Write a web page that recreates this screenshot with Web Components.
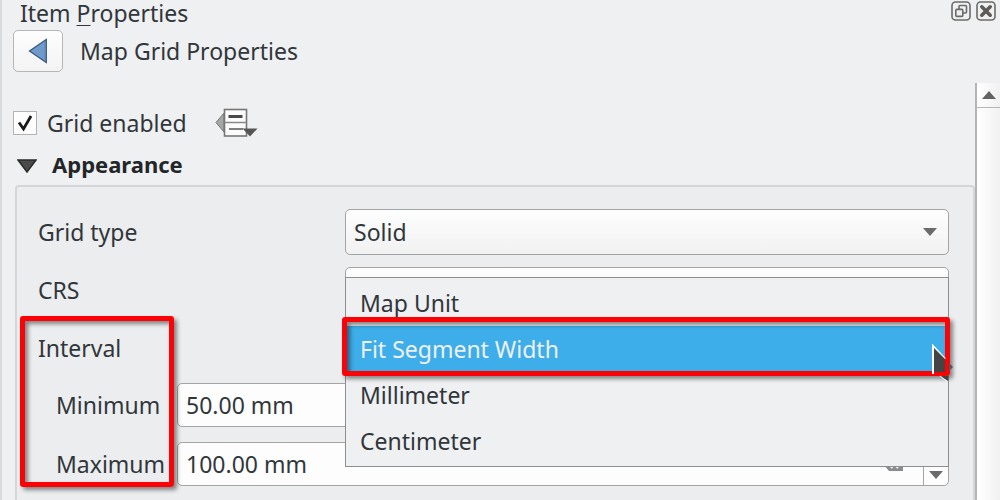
<!DOCTYPE html>
<html lang="en">
<head>
<meta charset="utf-8">
<title>Item Properties</title>
<style>
  body { margin: 0; background: #eff0f1; color: #31363b; font: 23px/30px "Noto Sans", sans-serif; height: 100vh; overflow: hidden; }
</style>
</head>
<body>
<dock-panel>
  <title-bar slot="title"></title-bar>
  <page-header slot="header">Map Grid Properties</page-header>
  <enable-row></enable-row>
  <group-box heading="Appearance">
    <select-field label="Grid type" value="Solid"></select-field>
    <select-field label="CRS" value=""></select-field>
    <interval-fields></interval-fields>
  </group-box>
</dock-panel>

<script>
const define = (name, html, setup) => {
  const template = document.createElement('template');
  template.innerHTML = '<style>*{box-sizing:border-box}button,input,select{font:inherit;color:inherit;margin:0}</style>' + html;
  customElements.define(name, class extends HTMLElement {
    connectedCallback() {
      if (this.shadowRoot) return;
      const root = this.attachShadow({ mode: 'open' });
      root.append(template.content.cloneNode(true));
      if (setup) setup(this, root);
    }
  });
};

define('dock-panel', `
  <style>
    :host { display: flex; flex-direction: column; height: 100%; box-sizing: border-box; border-left: 2px solid #d9dadb; }
    .view { display: flex; flex: 1; min-height: 0; margin-top: 11px; }
    .content { flex: 1; min-width: 0; overflow: hidden; padding-top: 24px; }
  </style>
  <slot name="title"></slot>
  <slot name="header"></slot>
  <div class="view">
    <div class="content"><slot></slot></div>
    <scroll-rail></scroll-rail>
  </div>`);

define('scroll-rail', `
  <style>
    :host { display: block; width: 25px; box-sizing: border-box; border-left: 2px solid #b4b5b6; background: linear-gradient(90deg, #fff, #f1f1f2); }
    button { display: grid; place-items: center; width: 100%; height: 25px; padding: 0; border: 0; border-bottom: 1px solid #b4b5b6; background: none; }
    svg { display: block; }
  </style>
  <button type="button" aria-label="Scroll up"><svg width="14" height="8" viewBox="0 0 14 8"><path d="M7 0 14 8H0Z" fill="#626363"/></svg></button>`);

define('title-bar', `
  <style>
    :host { display: flex; align-items: center; height: 26px; padding: 0 4px 0 18px; }
    h1 { flex: 1; margin: 0; font: inherit; line-height: 26px; }
    u { text-underline-offset: 3px; text-decoration-thickness: 1px; text-decoration-skip-ink: none; }
    div { display: flex; gap: 5px; padding-bottom: 4px; }
    button { display: block; padding: 0; border: 0; background: none; }
    svg { display: block; }
  </style>
  <h1>Item <u>P</u>roperties</h1>
  <div>
    <button type="button" aria-label="Float"><svg width="20" height="20" viewBox="0 0 20 20" fill="none" stroke="#6b6b69" stroke-width="1.6"><rect x="1" y="1" width="18" height="18" rx="3.5"/><path d="M8 8V5.500a1 1 0 0 1 1-1h5.500a1 1 0 0 1 1 1V11a1 1 0 0 1-1 1H12"/><rect x="4.800" y="8.400" width="7" height="7" rx="1"/></svg></button>
    <button type="button" aria-label="Close"><svg width="20" height="20" viewBox="0 0 20 20" fill="none" stroke="#6b6b69"><rect x="1" y="1" width="18" height="18" rx="3.500" stroke-width="1.6"/><path d="m5.800 5.800 8.400 8.400m0-8.400-8.400 8.400" stroke="#5c5b58" stroke-width="3.600" stroke-linecap="round"/></svg></button>
  </div>`);

define('page-header', `
  <style>
    :host { display: flex; align-items: center; gap: 17px; padding: 4px 11px 0; }
    button { display: grid; place-items: center; width: 50px; height: 42px; padding: 0; border: 1px solid #b5b6b7; border-radius: 5px; background: linear-gradient(#fefefe, #f3f3f4); }
    h2 { margin: 0; font: inherit; }
  </style>
  <button type="button" aria-label="Back"><svg width="20" height="26" viewBox="0 0 20 26"><path d="M18.300 1.500v23L1.500 13Z" fill="#6f9bcb" stroke="#3a5a80" stroke-width="1.300"/><path d="M17 4v18" stroke="#5b87b8" stroke-width="1"/></svg></button>
  <h2><slot></slot></h2>`);

define('enable-row', `
  <style>
    :host { display: flex; align-items: center; gap: 28px; height: 32px; padding: 0 0 2px 11px; }
    label { display: flex; align-items: center; gap: 10px; }
    .box { display: grid; }
    .box > * { grid-area: 1 / 1; }
    input { appearance: none; width: 24px; height: 24px; border: 1px solid #b2b3b4; background: #fdfdfd; }
    svg { display: block; pointer-events: none; }
    button { padding: 0; border: 0; background: none; }
  </style>
  <label><span class="box"><input type="checkbox" checked><svg width="24" height="24" viewBox="0 0 24 24"><path d="M6 11.500 10.500 18 18 5" fill="none" stroke="#191919" stroke-width="2.800"/></svg></span>Grid enabled</label>
  <button type="button" aria-label="Data defined override"><svg width="44" height="30" viewBox="0 0 44 30"><path d="M9 5 1 14.500 9 24Z" fill="#a5a6a6" stroke="#777" stroke-width="1"/><rect x="9.500" y="1.500" width="22" height="26.500" fill="#fbfbfb" stroke="#777" stroke-width="1.600"/><path d="M9.500 14.500h22" stroke="#888" stroke-width="1.500"/><path d="M13.500 8.500h14" stroke="#484848" stroke-width="3"/><path d="M14 21h14" stroke="#555" stroke-width="1.500"/><path d="M27.500 20.500h15l-7.500 8Z" fill="#555"/></svg></button>`);

define('group-box', `
  <style>
    :host { display: block; }
    header { display: flex; align-items: center; gap: 15px; height: 44px; padding: 2px 0 0 15px; }
    header button { display: block; padding: 4px 0 0; border: 0; background: none; }
    svg { display: block; }
    h3 { margin: 0; font-size: 22px; line-height: 30px; font-weight: 700; color: #232629; }
    .frame { display: flex; flex-direction: column; gap: 12px; margin-left: 13px; padding: 22px 26px 40px 21px; border: 2px solid #d5d6d7; border-radius: 4px 4px 0 0; background: #ebedee; }
  </style>
  <header><button type="button" aria-label="Collapse"><svg width="20" height="14" viewBox="0 0 20 14"><path d="M1 1h18l-9 12Z" fill="#4a4a4a" stroke="#2a2a2a" stroke-width="1.500"/></svg></button><h3></h3></header>
  <div class="frame"><slot></slot></div>`,
  (host, root) => {
    root.querySelector('h3').textContent = host.getAttribute('heading');
    root.querySelector('.frame').style.paddingRight = '24px';
  });

define('select-field', `
  <style>
    :host { display: grid; grid-template-columns: 295px 1fr; column-gap: 12px; align-items: center; }
    .wrap { display: grid; align-items: center; }
    .wrap > * { grid-area: 1 / 1; }
    select { appearance: none; width: 100%; height: 46px; padding: 0 40px 0 8px; border: 1px solid #a3a4a5; border-radius: 5px; background: linear-gradient(#fefefe, #f1f1f2); }
    svg { justify-self: end; margin-right: 12px; pointer-events: none; }
  </style>
  <label for="field"></label>
  <div class="wrap"><select id="field"><option></option></select><svg width="14" height="8" viewBox="0 0 14 8"><path d="M0 0h14L7 8Z" fill="#6a6b6b"/></svg></div>`,
  (host, root) => {
    root.querySelector('label').textContent = host.getAttribute('label');
    root.querySelector('option').textContent = host.getAttribute('value');
  });

define('spin-field', `
  <style>
    :host { display: grid; grid-template-columns: 109px 1fr; column-gap: 12px; align-items: center; }
    .wrap { display: flex; align-items: center; height: 44px; border: 1px solid #a3a4a5; border-radius: 5px; background: #fdfdfd; overflow: hidden; }
    input { flex: 1; min-width: 0; height: 100%; padding: 0 8px; border: 0; outline: 0; background: none; }
    button { display: grid; place-items: center; padding: 0; border: 0; background: none; }
    .clear { margin-right: 20px; }
    .steps { display: grid; grid-template-rows: 1fr 1fr; width: 25px; height: 100%; border-left: 1px solid #a3a4a5; }
    svg { display: block; }
  </style>
  <label for="field"></label>
  <div class="wrap">
    <input id="field" type="text">
    <button class="clear" type="button" aria-label="Clear"><svg width="20" height="14" viewBox="0 0 20 14"><path d="M6 0h14v14H6L0 7Z" fill="#8b8c8c"/><path d="m8 3 7 8m0-8-7 8" stroke="#fff" stroke-width="2"/></svg></button>
    <span class="steps">
      <button type="button" aria-label="Increase"><svg width="14" height="8" viewBox="0 0 14 8"><path d="M7 0 14 8H0Z" fill="#6a6b6b"/></svg></button>
      <button type="button" aria-label="Decrease"><svg width="14" height="8" viewBox="0 0 14 8"><path d="M0 0h14L7 8Z" fill="#6a6b6b"/></svg></button>
    </span>
  </div>`,
  (host, root) => {
    root.querySelector('label').textContent = host.getAttribute('label');
    root.querySelector('input').value = host.getAttribute('value');
  });

define('highlight-frame', `
  <style>
    :host { position: absolute; display: block; box-sizing: border-box; border: 5px solid #fb0207; border-radius: 3px; pointer-events: none; box-shadow: 3px 3px 4px rgba(0,0,0,.45), inset 3px 3px 4px rgba(0,0,0,.45); }
  </style>`);

define('unit-menu', `
  <style>
    :host { position: absolute; z-index: 1; inset: -48px 0 auto; }
    div { padding: 2px 1px; border: 1px solid #8d8e8f; background: #eff0f1; }
    button { position: relative; display: block; width: 100%; height: 46px; padding: 0 13px; border: 0; background: none; text-align: left; }
    [aria-selected] { z-index: 1; background: #3daee9; color: #eff0f1; }
    highlight-frame { inset: -9px -3px -4px -5px; }
    svg { position: absolute; right: -8px; top: 18px; }
  </style>
  <div role="listbox" aria-label="Interval unit">
    <button type="button" role="option">Map Unit</button>
    <button type="button" role="option" aria-selected="true">Fit Segment Width<highlight-frame></highlight-frame><svg width="24" height="38" viewBox="0 0 24 38"><path d="M2 30V2l12 13" fill="none" stroke="#fff" stroke-width="2"/><path d="M3 4v24h11V15Z" fill="#444"/><path d="M18 19 22 23l-4 4Z" fill="#555"/><path d="M9 32h8v5Z" fill="#444"/><path d="m9 32 8 6" stroke="#fff" stroke-width="1"/></svg></button>
    <button type="button" role="option">Millimeter</button>
    <button type="button" role="option">Centimeter</button>
  </div>`);

define('interval-fields', `
  <style>
    :host { position: relative; display: flex; flex-direction: column; gap: 12px; }
    .unit { position: relative; }
    .menu { position: absolute; inset: 0 0 auto 307px; }
    .range { display: flex; flex-direction: column; gap: 15px; padding-left: 18px; }
    highlight-frame { left: -18px; top: -9px; bottom: -1px; width: 154px; }
  </style>
  <div class="unit">
    <select-field label="Interval" value="Fit Segment Width"></select-field>
    <div class="menu"><unit-menu></unit-menu></div>
  </div>
  <div class="range">
    <spin-field label="Minimum" value="50.00 mm"></spin-field>
    <spin-field label="Maximum" value="100.00 mm"></spin-field>
  </div>
  <highlight-frame></highlight-frame>`);
</script>
</body>
</html>
